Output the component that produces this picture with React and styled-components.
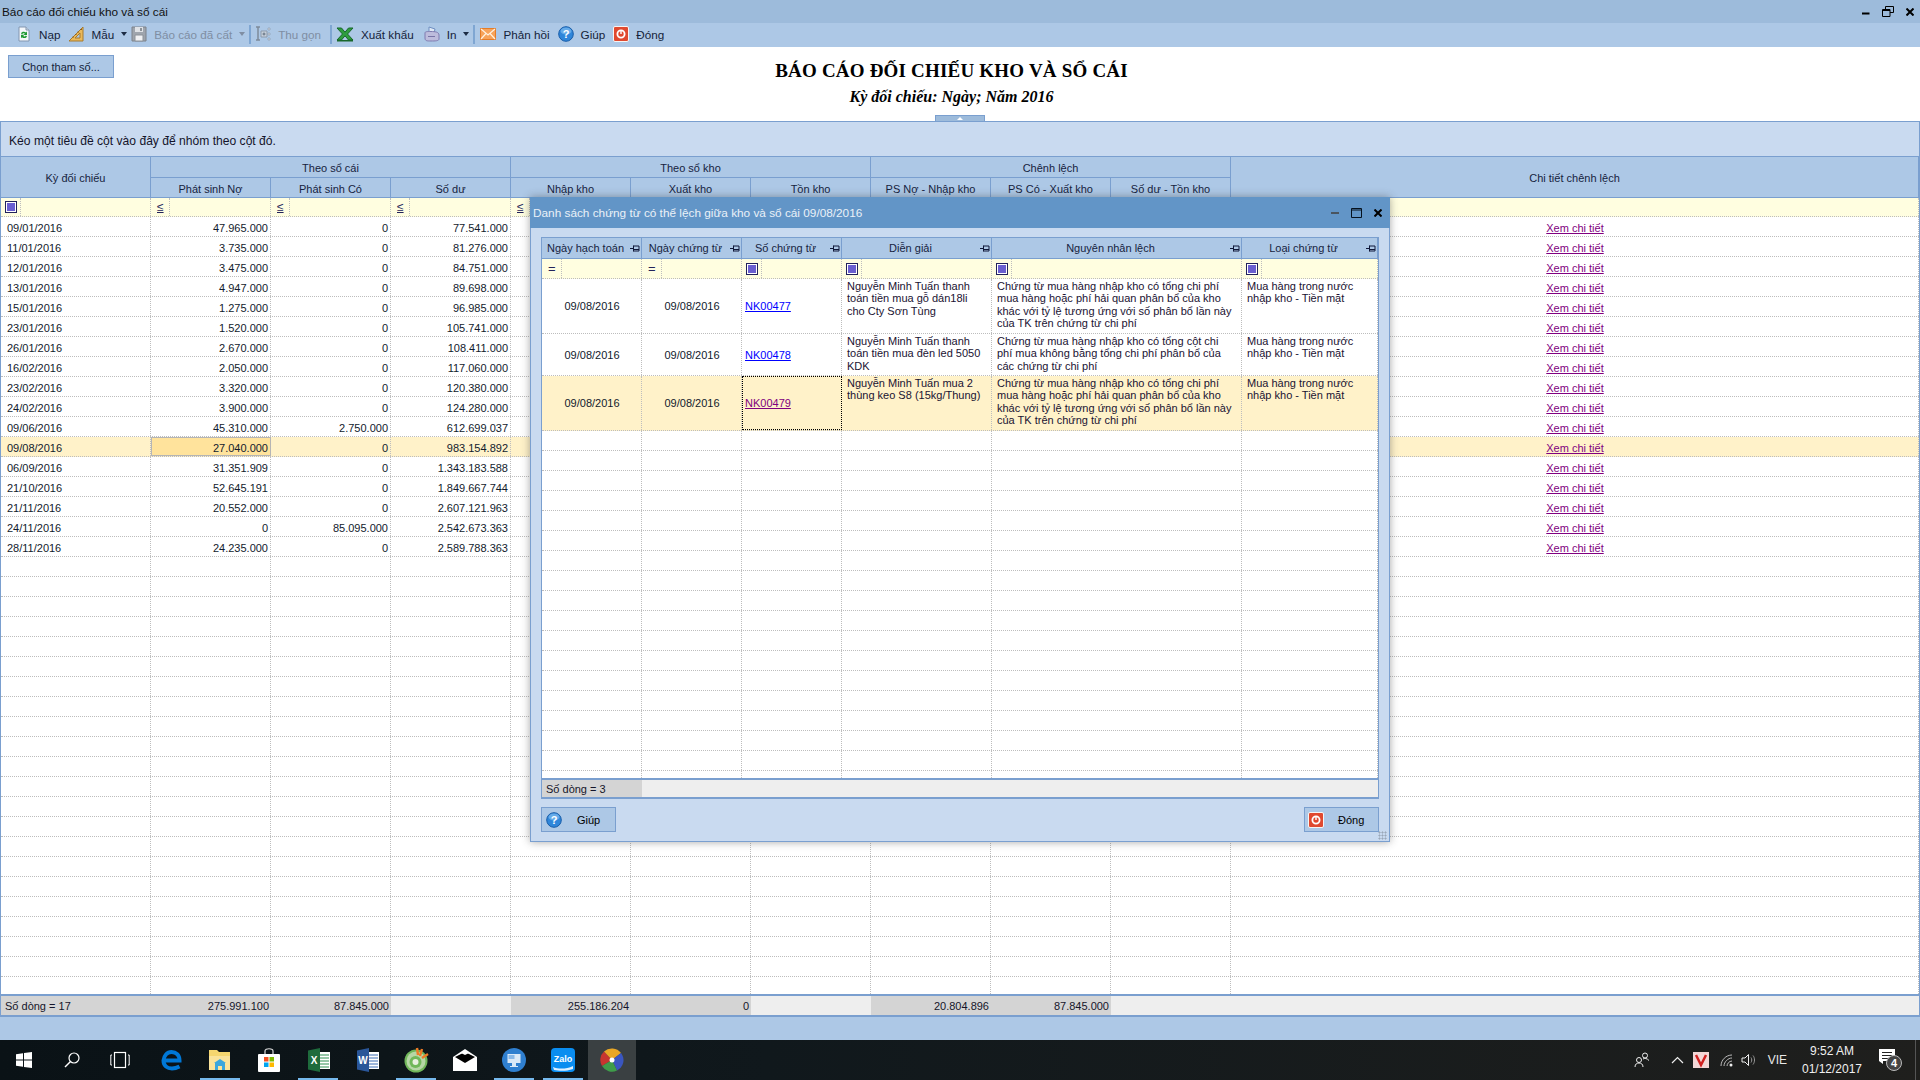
import React from "react";
import styled, { createGlobalStyle } from "styled-components";

const Global = createGlobalStyle`
  html, body { margin: 0; padding: 0; background: #fff; }
  body { font-family: "Liberation Sans", Arial, sans-serif; font-size: 11px; color: #111; overflow: hidden; }
  * { box-sizing: border-box; }
`;

const LINE = "#7a9fcf";
const DOT = "#bdbdbd";
const MAIN_COLS = "150px repeat(9, 120px) 1fr";
const MODAL_COLS = "100px 100px 100px 150px 250px 1fr";

const Page = styled.div`
  position: relative;
  width: 1920px;
  height: 1080px;
  display: flex;
  flex-direction: column;
  overflow: hidden;
`;
const TitleBar = styled.div`
  height: 23px;
  flex: none;
  background: #9dbbdb;
  display: flex;
  align-items: center;
  justify-content: space-between;
  padding: 0 6px 0 2px;
  font-size: 11.8px;
`;
const WinControls = styled.div`
  display: flex;
  align-items: center;
  gap: ${(p) => p.$gap || 10}px;
`;
const Toolbar = styled.div`
  height: 24px;
  flex: none;
  background: #adc8e6;
  display: flex;
  align-items: center;
  padding: 0 0 2px 4px;
  font-size: 11.7px;
`;
const Grip = styled.div`
  width: 4px;
  height: 18px;
  background-image: radial-gradient(#7f97b3 40%, transparent 45%);
  background-size: 2px 2px;
`;
const Tool = styled.div`
  display: flex;
  align-items: center;
  gap: 7px;
  margin-left: ${(p) => p.$ml || 0}px;
  color: ${(p) => (p.$off ? "#7f8ea3" : "#14233a")};
  white-space: nowrap;
`;
const Caret = styled.span`
  width: 0;
  height: 0;
  margin-left: ${(p) => p.$ml || 0}px;
  border-left: 3.5px solid transparent;
  border-right: 3.5px solid transparent;
  border-top: 4px solid ${(p) => (p.$off ? "#7f8ea3" : "#1c2c44")};
`;
const Sep = styled.div`
  width: 2px;
  height: 19px;
  margin-left: ${(p) => p.$ml || 5}px;
  background: #7fa6d2;
`;

const ReportHead = styled.div`
  position: relative;
  flex: none;
  height: 74px;
  background: #fff;
  display: grid;
  grid-template-columns: 1fr auto 1fr;
  padding: 8px 0 0 8px;
`;
const ParamButton = styled.div`
  width: 106px;
  height: 23px;
  display: flex;
  align-items: center;
  justify-content: center;
  background: #adc8e6;
  border: 1px solid ${LINE};
  font-size: 11px;
  color: #14233a;
`;
const Titles = styled.div`
  display: flex;
  flex-direction: column;
  align-items: center;
  font-family: "Liberation Serif", "Times New Roman", serif;
  color: #000;
  font-weight: 700;
  margin-left: -25px;
`;
const ReportTitle = styled.div`
  font-size: 19px;
  line-height: 22px;
  margin-top: 5px;
  letter-spacing: 0.2px;
`;
const ReportSub = styled.div`
  font-size: 16px;
  font-style: italic;
  line-height: 20px;
  margin-top: 5px;
`;
const Handle = styled.div`
  position: absolute;
  left: 935px;
  bottom: 0;
  width: 50px;
  height: 6px;
  background: #9dbbdb;
  border: 1px solid ${LINE};
  border-bottom: none;
  display: flex;
  justify-content: center;
  align-items: center;
  &::after {
    content: "";
    border-left: 3px solid transparent;
    border-right: 3px solid transparent;
    border-bottom: 3px solid #fff;
  }
`;
const GroupPanel = styled.div`
  flex: none;
  height: 36px;
  background: #c9daf0;
  border: 1px solid ${LINE};
  padding: 4px 0 0 8px;
  display: flex;
  align-items: center;
  color: #14142a;
  font-size: 12.1px;
`;
const GridFrame = styled.div`
  flex: 1;
  min-height: 0;
  display: flex;
  flex-direction: column;
  border-left: 1px solid ${LINE};
  border-right: 1px solid ${LINE};
  background: #fff;
`;
const HeadGrid = styled.div`
  flex: none;
  display: grid;
  grid-template-columns: ${(p) => p.$cols};
  grid-template-rows: ${(p) => p.$rows};
`;
const HeadCell = styled.div`
  grid-column: span ${(p) => p.$cs || 1};
  grid-row: span ${(p) => p.$rs || 1};
  background: #adc8e6;
  border-right: 1px solid ${LINE};
  border-bottom: 1px solid ${LINE};
  display: flex;
  align-items: center;
  justify-content: center;
  position: relative;
  padding-right: ${(p) => (p.$pin ? 12 : 0)}px;
  color: #16233e;
  white-space: nowrap;
`;
const MainHead = styled(HeadCell)`
  padding-top: 2px;
`;
const PinMark = styled.svg`
  position: absolute;
  right: 1px;
  top: 6px;
`;
const Body = styled.div`
  flex: 1;
  min-height: 0;
  overflow: hidden;
`;
const Row = styled.div`
  display: grid;
  grid-template-columns: ${(p) => p.$cols};
  height: ${(p) => p.$h || 20}px;
  background: ${(p) => (p.$sel ? "#fff2c9" : p.$filter ? "#fffee0" : "#fff")};
  border-bottom: 1px dotted ${DOT};
`;
const Cell = styled.div`
  border-right: 1px dotted ${DOT};
  display: flex;
  align-items: center;
  justify-content: ${(p) => (p.$align === "right" ? "flex-end" : p.$align === "center" ? "center" : "flex-start")};
  padding: 0 2px 0 ${(p) => p.$pl ?? 3}px;
  color: #111a2c;
  white-space: pre;
  overflow: hidden;
  ${(p) => p.$active && `background: #ffe39c; outline: 1px solid #b5b5b5; outline-offset: -1px;`}
  ${(p) => p.$focus && `outline: 1px dotted #000; outline-offset: -1px;`}
`;
const MainCell = styled(Cell)`
  padding-top: 2px;
`;
const WrapCell = styled.div`
  border-right: 1px dotted ${DOT};
  padding: 1px 0 0 5px;
  line-height: 12.3px;
  color: #1a1232;
  white-space: pre;
  overflow: hidden;
`;
const FilterCell = styled.div`
  border-right: 1px dotted ${DOT};
  display: grid;
  grid-template-columns: ${(p) => p.$w || 19}px 1fr;
  align-items: center;
  height: 100%;
  overflow: hidden;
`;
const FilterOp = styled.div`
  height: 100%;
  border-right: 1px dotted ${DOT};
  display: flex;
  align-items: center;
  padding-left: ${(p) => p.$pl || 5}px;
  font-size: 13px;
  color: #23235a;
`;
const OpLe = styled.span`
  text-decoration: underline;
  font-size: 12px;
`;
const CheckMark = styled.span`
  width: 12px;
  height: 12px;
  border: 1px solid #22225c;
  padding: 1px;
  background: #fff;
  display: block;
  &::after {
    content: "";
    display: block;
    width: 100%;
    height: 100%;
    background: #6a5fd0;
  }
`;
const Lnk = styled.a`
  color: ${(p) => (p.$seen ? "#800080" : "#0000ff")};
  text-decoration: underline;
`;
const TotalRow = styled.div`
  flex: none;
  display: grid;
  grid-template-columns: ${(p) => p.$cols};
  height: ${(p) => p.$h}px;
  border-top: 2px solid ${LINE};
  border-bottom: 2px solid ${LINE};
  background: #eeeeee;
  box-sizing: content-box;
`;
const TotalCell = styled.div`
  background: ${(p) => (p.$dark ? "#d4d4d4" : "#eeeeee")};
  display: flex;
  align-items: center;
  justify-content: ${(p) => (p.$left ? "flex-start" : "flex-end")};
  padding: 0 2px 0 4px;
  color: #14142a;
  white-space: nowrap;
`;
const StatusBand = styled.div`
  flex: none;
  height: 23px;
  background: #adc8e6;
`;

const Modal = styled.div`
  position: absolute;
  left: 530px;
  top: 197px;
  width: 860px;
  height: 645px;
  background: #c9daf0;
  border: 1px solid ${LINE};
  border-top: none;
  box-shadow: 0 0 8px rgba(60, 60, 60, 0.45);
  display: flex;
  flex-direction: column;
`;
const ModalTitle = styled.div`
  flex: none;
  height: 31px;
  margin: 0 -1px;
  background: #6295c7;
  color: #eaf1f8;
  font-size: 11.8px;
  display: flex;
  align-items: center;
  justify-content: space-between;
  padding: 0 8px 0 3px;
`;
const ModalBody = styled.div`
  flex: 1;
  min-height: 0;
  display: flex;
  flex-direction: column;
  padding: 9px 10px 0 10px;
`;
const ModalGrid = styled.div`
  height: 562px;
  flex: none;
  display: flex;
  flex-direction: column;
  background: #fff;
  border: 1px solid ${LINE};
  border-bottom: none;
`;
const ModalFoot = styled.div`
  position: relative;
  flex: 1;
  display: flex;
  justify-content: space-between;
  padding-top: 8px;
`;
const ModalBtn = styled.div`
  width: 75px;
  height: 25px;
  background: #adc8e6;
  border: 1px solid ${LINE};
  display: flex;
  align-items: center;
  gap: ${(p) => p.$gap}px;
  padding-left: ${(p) => p.$pl}px;
  color: #000;
`;
const Corner = styled.div`
  position: absolute;
  right: -8px;
  bottom: 1px;
  width: 9px;
  height: 9px;
  background-image: radial-gradient(#9aa7b8 45%, transparent 50%);
  background-size: 3px 3px;
`;

const Taskbar = styled.div`
  flex: none;
  height: 40px;
  background: linear-gradient(90deg, #0a1216 0%, #10181c 40%, #1f1f1d 100%);
  display: flex;
  align-items: stretch;
  color: #fff;
`;
const TaskSlot = styled.div`
  position: relative;
  width: ${(p) => p.$w || 49}px;
  margin-left: ${(p) => p.$ml || 0}px;
  display: flex;
  align-items: center;
  padding-left: ${(p) => p.$pl ?? 10}px;
  background: ${(p) => (p.$active ? "#3a4042" : "transparent")};
  ${(p) =>
    p.$running &&
    `&::after { content: ""; position: absolute; left: 0; bottom: 0; width: 40px; height: 2px; background: #76b9ed; }`}
`;
const Tray = styled.div`
  margin-left: auto;
  display: flex;
  align-items: center;
  height: 100%;
  padding-right: 11px;
  margin-right: 4px;
  border-right: 1px solid #555;
`;
const TrayLabel = styled.span`
  font-size: 12px;
  color: #e8e8e8;
  margin-left: ${(p) => p.$ml || 0}px;
`;
const Clock = styled.div`
  margin-left: ${(p) => p.$ml || 0}px;
  width: 86px;
  display: flex;
  flex-direction: column;
  align-items: center;
  font-size: 12px;
  line-height: 18px;
  color: #f0f0f0;
`;
const TrayBox = styled.div`
  display: flex;
  margin-left: ${(p) => p.$ml || 0}px;
`;

/* ---------- icons ---------- */
const Pin = () => (
  <PinMark width="10" height="9" viewBox="0 0 10 9">
    <path d="M0 4.5H3M3.5 1.5V7.5M3.5 2H9V7H3.5M3.5 5.5H9" stroke="#10183a" fill="none" strokeWidth="1" />
  </PinMark>
);
const Icon = ({ children, s = 16, vb = 16 }) => (
  <svg width={s} height={s} viewBox={`0 0 ${vb} ${vb}`} style={{ display: "block", flex: "none" }}>
    {children}
  </svg>
);
const IcoRefresh = () => (
  <Icon>
    <path d="M3 1H10L13 4V15H3Z" fill="#f4f7fb" stroke="#8296b0" />
    <path d="M10 1V4H13" fill="#cfdbe9" stroke="#8296b0" />
    <path d="M5 7.5C5.500 5.500 8.500 5 10 6.500L11 5.500V9H7.600L8.800 7.800C8 7 6.600 7.200 6.200 8.200Z" fill="#1f9a32" />
    <path d="M11 10.200C10.500 12.200 7.500 12.800 6 11.200L5 12.200V8.800H8.400L7.200 10C8 10.800 9.400 10.600 9.800 9.600Z" fill="#1f9a32" />
  </Icon>
);
const IcoRuler = () => (
  <Icon>
    <path d="M15 1V15H1Z" fill="#eab95a" stroke="#a87a2c" />
    <path d="M12 7V12H7Z" fill="#adc8e6" stroke="#a87a2c" />
    <path d="M12 3.500H14M9.500 6H11M7 8.500H8.500M4.500 11H6" stroke="#8a5f20" />
  </Icon>
);
const IcoSave = () => (
  <Icon>
    <path d="M1 1H15V15H1Z" fill="#9fa5ad" stroke="#7c828a" />
    <path d="M4 1H12V6H4Z" fill="#dfe2e6" />
    <path d="M4 9H12V15H4Z" fill="#f0f1f3" stroke="#8c9299" />
    <path d="M9 2H11V5H9Z" fill="#8c9299" />
  </Icon>
);
const IcoTree = () => (
  <Icon>
    <path d="M1 1H5M1 14H5M3 1V14" stroke="#7d8a9b" strokeWidth="1.5" fill="none" />
    <path d="M6 5H12V11H6Z" fill="#c7d0db" stroke="#8c99aa" />
    <path d="M7.500 8H10.500M9 6.500V9.500" stroke="#5f6c7d" />
    <path d="M13 2H15V4H13ZM13 7H15V9H13ZM13 12H15V14H13Z" fill="#d6dde6" stroke="#8c99aa" strokeWidth=".6" />
  </Icon>
);
const IcoExcel = () => (
  <Icon s={18} vb={18}>
    <path d="M1 3H5.500L9 7.200L12.500 3H17L11.500 9L17 15H12.500L9 10.800L5.500 15H1L6.500 9Z" fill="#2f9e3f" stroke="#17672a" />
    <path d="M1 15H17V16.500H1Z" fill="#17672a" />
  </Icon>
);
const IcoPrint = () => (
  <Icon>
    <path d="M5 1L11 3L10 7H5Z" fill="#dfe8f4" stroke="#6f8fc2" />
    <path d="M1 7C1 5.500 3 5.500 7 5.500S15 6 15 9V13C15 15 11 15 7 15S1 15 1 12Z" fill="#bdbcdc" stroke="#7f7bb0" />
    <path d="M4 10.500H11" stroke="#7874a6" />
  </Icon>
);
const IcoMail = () => (
  <Icon>
    <path d="M0.500 2.500H15.500V13.500H0.500Z" fill="#f7a35a" stroke="#e57c26" />
    <path d="M1 3L8 9L15 3M1 13L6 7.500M15 13L10 7.500" fill="none" stroke="#fff1df" strokeWidth="1.2" />
  </Icon>
);
const IcoHelp = ({ s = 16 }) => (
  <Icon s={s}>
    <circle cx="8" cy="8" r="7.300" fill="#2f86da" stroke="#175ca8" />
    <ellipse cx="8" cy="5" rx="5.500" ry="3.500" fill="#8cc4f3" opacity=".6" />
    <text x="8" y="12" textAnchor="middle" fontFamily="Liberation Sans" fontWeight="700" fontSize="11" fill="#fff">?</text>
  </Icon>
);
const IcoClose = ({ s = 16 }) => (
  <Icon s={s}>
    <rect x="0.500" y="0.500" width="15" height="15" rx="1.500" fill="#e0492f" stroke="#f5f5f5" />
    <circle cx="8" cy="8" r="3.600" fill="none" stroke="#fff" strokeWidth="1.800" />
    <path d="M8 4.200V8" stroke="#fff" strokeWidth="1.400" />
  </Icon>
);
const WMin = () => (
  <svg width="8" height="8" viewBox="0 0 8 8"><path d="M0 5.500H7.500" stroke="#000" strokeWidth="2" /></svg>
);
const WRestore = () => (
  <svg width="12" height="11" viewBox="0 0 12 11">
    <path d="M3.500 3V.5H11.500V6.500H8M.5 3.500H8V10.500H.5Z M.5 4.500H8" fill="none" stroke="#000" />
  </svg>
);
const WClose = ({ c = "#000" }) => (
  <svg width="8" height="8" viewBox="0 0 8 8"><path d="M.5 .5L7.500 7.500M7.500 .5L.5 7.500" stroke={c} strokeWidth="2" /></svg>
);
const MMin = () => (
  <svg width="8" height="4" viewBox="0 0 8 4"><path d="M0 2H8" stroke="#4a5560" strokeWidth="2" /></svg>
);
const MMax = () => (
  <svg width="11" height="10" viewBox="0 0 11 10"><path d="M.5 .5H10.500V9.500H.5Z M.5 2H10.500" fill="none" stroke="#06121f" /></svg>
);

const TaskWin = () => (
  <Icon s={16}>
    <path d="M0 2.300L7 1.200V7.500H0ZM8 1L16 0V7.500H8ZM0 8.500H7V14.800L0 13.700ZM8 8.500H16V16L8 15Z" fill="#fff" />
  </Icon>
);
const TaskSearch = () => (
  <Icon s={16}>
    <circle cx="10" cy="6" r="5" fill="none" stroke="#fff" strokeWidth="1.200" />
    <path d="M6.500 9.500L1 15" stroke="#fff" strokeWidth="1.400" />
  </Icon>
);
const TaskView = () => (
  <Icon s={20} vb={20}>
    <rect x="4.500" y="2.500" width="11" height="15" fill="none" stroke="#fff" strokeWidth="1.200" />
    <path d="M2 5H.8V15H2M18 5H19.200V15H18" fill="none" stroke="#fff" />
  </Icon>
);
const TaskEdge = () => (
  <Icon s={22} vb={22}>
    <path d="M4 11.500H18.500C18.500 6 15 3 10.500 3C6 3 3 7 2.500 11.500C2.500 17 6.500 19.500 11 19.500C14 19.500 16.500 18.500 18.500 17.500" fill="none" stroke="#0078d7" strokeWidth="4" />
  </Icon>
);
const TaskFiles = () => (
  <Icon s={24} vb={24}>
    <path d="M1 2H9L11 4H22V22H1Z" fill="#f5d66f" />
    <path d="M1 8H22V22H1Z" fill="#fae39a" />
    <path d="M7 15H17V22H14V18H10V22H7Z" fill="#3aa6dd" />
    <path d="M6 15L12 11L18 15Z" fill="#3aa6dd" />
  </Icon>
);
const TaskStore = () => (
  <Icon s={24} vb={24}>
    <path d="M8 6V3C8 0 16 0 16 3V6" fill="none" stroke="#ddd" strokeWidth="1.200" />
    <rect x="1" y="6" width="22" height="18" rx="1" fill="#fff" />
    <path d="M7 9H11.500V13.500H7Z" fill="#f25022" />
    <path d="M12.500 9H17V13.500H12.500Z" fill="#7fba00" />
    <path d="M7 14.500H11.500V19H7Z" fill="#00a4ef" />
    <path d="M12.500 14.500H17V19H12.500Z" fill="#ffb900" />
  </Icon>
);
const TaskOffice = ({ bg, ln, ch }) => (
  <Icon s={24} vb={24}>
    <path d="M12 4H23V21H12Z" fill="#fff" />
    <path d="M13 7H22M13 10H22M13 13H22M13 16H22M13 19H22" stroke={ln} strokeWidth="1" />
    <path d="M1 2.500L13 0V24L1 21.500Z" fill={bg} />
    <text x="7" y="16" textAnchor="middle" fontFamily="Liberation Sans" fontWeight="700" fontSize="10" fill="#fff">{ch}</text>
  </Icon>
);
const TaskCoc = () => (
  <Icon s={26} vb={26}>
    <circle cx="12" cy="14" r="11.500" fill="#71b75a" />
    <circle cx="12" cy="14" r="9.500" fill="#e5ebd8" opacity=".6" />
    <circle cx="11.500" cy="15" r="6" fill="#71b75a" />
    <circle cx="11.500" cy="15" r="3" fill="#e9efdf" />
    <path d="M13 1L14 8M18 2L16 9M24 7L18 11" stroke="#ee7a24" strokeWidth="2.400" />
  </Icon>
);
const TaskMail = () => (
  <Icon s={24} vb={24}>
    <path d="M0 9L12 1L24 9V23H0Z" fill="#fff" />
    <path d="M2 9L12 4L22 9L12 15Z" fill="#000" />
    <path d="M8 5L12 2.500L16 5L12 7Z" fill="#fff" />
  </Icon>
);
const TaskRemote = () => (
  <Icon s={24} vb={24}>
    <circle cx="12" cy="12" r="12" fill="#2f7fcf" />
    <rect x="5.500" y="6" width="13" height="9" fill="#dbe9f7" />
    <rect x="6.500" y="7" width="6" height="4" fill="#8ab9e8" />
    <path d="M10 15H14V18H16V19H8V18H10Z" fill="#dbe9f7" />
  </Icon>
);
const TaskZalo = () => (
  <Icon s={24} vb={24}>
    <rect x="0" y="0" width="24" height="24" rx="4" fill="#0a8df0" />
    <text x="12" y="13.500" textAnchor="middle" fontFamily="Liberation Sans" fontWeight="700" fontSize="9" fill="#fff">Zalo</text>
    <path d="M2 19C7 21 15 21.500 22 18V21C15 23.500 8 23 3 22Z" fill="#dff0ff" />
  </Icon>
);
const TaskColor = () => (
  <Icon s={24} vb={24}>
    <path d="M12 12L4 3.500A11.500 11.500 0 0 0 2 18Z" fill="#c8352f" />
    <path d="M12 12L4 3.500A11.500 11.500 0 0 1 21 5Z" fill="#e9a726" />
    <path d="M12 12L21 5A11.500 11.500 0 0 1 17 22.500Z" fill="#3a56c0" />
    <path d="M12 12L17 22.500A11.500 11.500 0 0 1 2 18Z" fill="#3f9d4a" />
    <circle cx="12" cy="12" r="2.500" fill="#fff" />
  </Icon>
);
const TrayPeople = () => (
  <Icon s={16}>
    <circle cx="5" cy="8" r="2.500" fill="none" stroke="#eee" />
    <path d="M1 15C1 12 3 11 5 11S9 12 9 15" fill="none" stroke="#eee" />
    <circle cx="11" cy="3.500" r="2.500" fill="none" stroke="#eee" />
    <path d="M9 7C10.500 6 13 6.200 15 8.500" fill="none" stroke="#eee" />
  </Icon>
);
const TrayChevron = () => (
  <svg width="13" height="8" viewBox="0 0 13 8" style={{ display: "block" }}>
    <path d="M1 7L6.500 1.500L12 7" fill="none" stroke="#eee" strokeWidth="1.200" />
  </svg>
);
const TrayV = () => (
  <Icon s={16}>
    <rect width="16" height="16" fill="#f3d6d6" />
    <path d="M3 3L8 13L13 3" fill="none" stroke="#d02020" strokeWidth="2.500" />
  </Icon>
);
const TrayWifi = () => (
  <Icon s={14} vb={14}>
    <path d="M1 13C1 7 6 2 12 2M4 13C4 9 8 5 12 5M7 13C7 11 9 8 12 8" fill="none" stroke="#bbb" />
    <circle cx="11" cy="12" r="1.500" fill="#eee" />
  </Icon>
);
const TraySound = () => (
  <Icon s={16}>
    <path d="M1 6H4L7.500 2.500V13.500L4 10H1Z" fill="none" stroke="#eee" />
    <path d="M10 5.500C11 7 11 9 10 10.500M12 3.500C14 6 14 10 12 12.500" fill="none" stroke="#999" />
  </Icon>
);
const TrayNote = () => (
  <svg width="26" height="24" viewBox="0 0 26 24" style={{ display: "block" }}>
    <path d="M1 1H17V13H5V16L1 13Z" fill="#fff" />
    <path d="M4 4.500H14M4 7.500H14M4 10.500H11" stroke="#222" />
    <circle cx="16" cy="15" r="7.500" fill="#444" stroke="#bbb" />
    <text x="16" y="19" textAnchor="middle" fontFamily="Liberation Sans" fontWeight="700" fontSize="11" fill="#fff">4</text>
  </svg>
);

/* ---------- data ---------- */
const DATA = [
  ["09/01/2016", "47.965.000", "0", "77.541.000"],
  ["11/01/2016", "3.735.000", "0", "81.276.000"],
  ["12/01/2016", "3.475.000", "0", "84.751.000"],
  ["13/01/2016", "4.947.000", "0", "89.698.000"],
  ["15/01/2016", "1.275.000", "0", "96.985.000"],
  ["23/01/2016", "1.520.000", "0", "105.741.000"],
  ["26/01/2016", "2.670.000", "0", "108.411.000"],
  ["16/02/2016", "2.050.000", "0", "117.060.000"],
  ["23/02/2016", "3.320.000", "0", "120.380.000"],
  ["24/02/2016", "3.900.000", "0", "124.280.000"],
  ["09/06/2016", "45.310.000", "2.750.000", "612.699.037"],
  ["09/08/2016", "27.040.000", "0", "983.154.892"],
  ["06/09/2016", "31.351.909", "0", "1.343.183.588"],
  ["21/10/2016", "52.645.191", "0", "1.849.667.744"],
  ["21/11/2016", "20.552.000", "0", "2.607.121.963"],
  ["24/11/2016", "0", "85.095.000", "2.542.673.363"],
  ["28/11/2016", "24.235.000", "0", "2.589.788.363"],
];
const TOTALS = [
  ["Số dòng = 17", 1, 1],
  ["275.991.100", 1],
  ["87.845.000", 1],
  ["", 0],
  ["255.186.204", 1],
  ["0", 1],
  ["", 0],
  ["20.804.896", 1],
  ["87.845.000", 1],
  ["", 0],
  ["", 0],
];
const DETAIL_A =
  "Chứng từ mua hàng nhập kho có tổng chi phí\nmua hàng hoặc phí hải quan phân bổ của kho\nkhác với tỷ lệ tương ứng với số phân bổ lần này\ncủa TK trên chứng từ chi phí";
const DETAIL_B =
  "Chứng từ mua hàng nhập kho có tổng cột chi\nphí mua không bằng tổng chi phí phân bổ của\ncác chứng từ chi phí";
const KIND = "Mua hàng trong nước\nnhập kho - Tiền mặt";
const VOUCHERS = [
  { no: "NK00477", h: 55, desc: "Nguyễn Minh Tuấn thanh\ntoán tiền mua gỗ dán18li\ncho Cty Sơn Tùng", why: DETAIL_A },
  { no: "NK00478", h: 42, desc: "Nguyễn Minh Tuấn thanh\ntoán tiền mua đèn led 5050\nKDK", why: DETAIL_B },
  { no: "NK00479", h: 55, sel: true, desc: "Nguyễn Minh Tuấn mua 2\nthùng keo S8 (15kg/Thung)", why: DETAIL_A },
];
const MODAL_HEADS = ["Ngày hạch toán", "Ngày chứng từ", "Số chứng từ", "Diễn giải", "Nguyên nhân lệch", "Loại chứng từ"];

const FilterRow = ({ cols, ops, h, w }) => (
  <Row $cols={cols} $filter $h={h}>
    {ops.map((op, i) => (
      <FilterCell key={i} $w={op === "box" || w ? 20 : 19}>
        <FilterOp $pl={op === "box" ? 4 : 6}>
          {op === "box" ? <CheckMark /> : op === "le" ? <OpLe>≤</OpLe> : op === "eq" ? "=" : null}
        </FilterOp>
      </FilterCell>
    ))}
  </Row>
);

export default function App() {
  return (
    <Page>
      <Global />
      <TitleBar>
        <span>Báo cáo đối chiếu kho và sổ cái</span>
        <WinControls $gap={12}>
          <WMin />
          <WRestore />
          <WClose />
        </WinControls>
      </TitleBar>

      <Toolbar>
        <Grip />
        <Tool $ml={8}><IcoRefresh /><span>Nạp</span></Tool>
        <Tool $ml={8}><IcoRuler /><span>Mẫu</span><Caret /></Tool>
        <Tool $ml={4} $off><IcoSave /><span>Báo cáo đã cất</span><Caret $off /></Tool>
        <Sep $ml={4} />
        <Tool $ml={4} $off><IcoTree /><span>Thu gọn</span></Tool>
        <Sep $ml={9} />
        <Tool $ml={4}><IcoExcel /><span>Xuất khẩu</span></Tool>
        <Tool $ml={10}><IcoPrint /><span>In</span><Caret /></Tool>
        <Sep $ml={4} />
        <Tool $ml={5}><IcoMail /><span>Phản hồi</span></Tool>
        <Tool $ml={8}><IcoHelp /><span>Giúp</span></Tool>
        <Tool $ml={8}><IcoClose /><span>Đóng</span></Tool>
      </Toolbar>

      <ReportHead>
        <div><ParamButton>Chọn tham số...</ParamButton></div>
        <Titles>
          <ReportTitle>BÁO CÁO ĐỐI CHIẾU KHO VÀ SỔ CÁI</ReportTitle>
          <ReportSub>Kỳ đối chiếu: Ngày; Năm 2016</ReportSub>
        </Titles>
        <div />
        <Handle />
      </ReportHead>

      <GroupPanel>Kéo một tiêu đề cột vào đây để nhóm theo cột đó.</GroupPanel>

      <GridFrame>
        <HeadGrid $cols={MAIN_COLS} $rows="21px 20px">
          <MainHead $rs={2}>Kỳ đối chiếu</MainHead>
          <MainHead $cs={3}>Theo sổ cái</MainHead>
          <MainHead $cs={3}>Theo sổ kho</MainHead>
          <MainHead $cs={3}>Chênh lệch</MainHead>
          <MainHead $rs={2}>Chi tiết chênh lệch</MainHead>
          {["Phát sinh Nợ", "Phát sinh Có", "Số dư", "Nhập kho", "Xuất kho", "Tồn kho", "PS Nợ - Nhập kho", "PS Có - Xuất kho", "Số dư - Tồn kho"].map((t) => (
            <MainHead key={t}>{t}</MainHead>
          ))}
        </HeadGrid>
        <Body>
          <FilterRow cols={MAIN_COLS} h={19} ops={["box", "le", "le", "le", "le", "", "", "", "", "", ""]} />
          {DATA.map((r, i) => {
            const sel = r[0] === "09/08/2016";
            return (
              <Row key={i} $cols={MAIN_COLS} $sel={sel}>
                <MainCell $pl={6}>{r[0]}</MainCell>
                <MainCell $align="right" $active={sel}>{r[1]}</MainCell>
                <MainCell $align="right">{r[2]}</MainCell>
                <MainCell $align="right">{r[3]}</MainCell>
                {Array.from({ length: 6 }, (_, k) => <Cell key={k} />)}
                <MainCell $align="center"><Lnk $seen>Xem chi tiết</Lnk></MainCell>
              </Row>
            );
          })}
          {Array.from({ length: 22 }, (_, i) => (
            <Row key={i} $cols={MAIN_COLS}>
              {Array.from({ length: 11 }, (_, k) => <Cell key={k} />)}
            </Row>
          ))}
        </Body>
        <TotalRow $cols={MAIN_COLS} $h={19}>
          {TOTALS.map(([t, dark, left], i) => (
            <TotalCell key={i} $dark={dark} $left={left}>{t}</TotalCell>
          ))}
        </TotalRow>
      </GridFrame>
      <StatusBand />

      <Taskbar>
        <TaskSlot $w={48} $pl={16}><TaskWin /></TaskSlot>
        <TaskSlot $w={48} $pl={16}><TaskSearch /></TaskSlot>
        <TaskSlot $w={55} $pl={14}><TaskView /></TaskSlot>
        <TaskSlot $pl={10}><TaskEdge /></TaskSlot>
        <TaskSlot $running $pl={8}><TaskFiles /></TaskSlot>
        <TaskSlot $pl={8}><TaskStore /></TaskSlot>
        <TaskSlot $running $pl={9}><TaskOffice bg="#1e6b3c" ln="#2f8f52" ch="X" /></TaskSlot>
        <TaskSlot $pl={9}><TaskOffice bg="#2a5699" ln="#3f6fb5" ch="W" /></TaskSlot>
        <TaskSlot $running $pl={8}><TaskCoc /></TaskSlot>
        <TaskSlot $pl={8}><TaskMail /></TaskSlot>
        <TaskSlot $running $pl={8}><TaskRemote /></TaskSlot>
        <TaskSlot $running $pl={8}><TaskZalo /></TaskSlot>
        <TaskSlot $active $w={48} $ml={-4} $pl={12}><TaskColor /></TaskSlot>
        <Tray>
          <TrayBox><TrayPeople /></TrayBox>
          <TrayBox $ml={21}><TrayChevron /></TrayBox>
          <TrayBox $ml={9}><TrayV /></TrayBox>
          <TrayBox $ml={11}><TrayWifi /></TrayBox>
          <TrayBox $ml={7}><TraySound /></TrayBox>
          <TrayLabel $ml={11}>VIE</TrayLabel>
          <Clock $ml={2}>
            <span>9:52 AM</span>
            <span>01/12/2017</span>
          </Clock>
          <TrayBox $ml={3}><TrayNote /></TrayBox>
        </Tray>
      </Taskbar>

      <Modal>
        <ModalTitle>
          <span>Danh sách chứng từ có thể lệch giữa kho và sổ cái 09/08/2016</span>
          <WinControls $gap={12}>
            <MMin />
            <MMax />
            <WClose />
          </WinControls>
        </ModalTitle>
        <ModalBody>
          <ModalGrid>
            <HeadGrid $cols={MODAL_COLS} $rows="21px">
              {MODAL_HEADS.map((t) => (
                <HeadCell key={t} $pin>{t}<Pin /></HeadCell>
              ))}
            </HeadGrid>
            <Body>
              <FilterRow cols={MODAL_COLS} h={20} w ops={["eq", "eq", "box", "box", "box", "box"]} />
              {VOUCHERS.map((v) => (
                <Row key={v.no} $cols={MODAL_COLS} $h={v.h} $sel={v.sel}>
                  <Cell $align="center">09/08/2016</Cell>
                  <Cell $align="center">09/08/2016</Cell>
                  <Cell $focus={v.sel}>
                    <Lnk $seen={v.sel}>{v.no}</Lnk>
                  </Cell>
                  <WrapCell>{v.desc}</WrapCell>
                  <WrapCell>{v.why}</WrapCell>
                  <WrapCell>{KIND}</WrapCell>
                </Row>
              ))}
              {Array.from({ length: 18 }, (_, i) => (
                <Row key={i} $cols={MODAL_COLS}>
                  {Array.from({ length: 6 }, (_, k) => <Cell key={k} />)}
                </Row>
              ))}
            </Body>
            <TotalRow $cols={MODAL_COLS} $h={17}>
              <TotalCell $dark $left>Số dòng = 3</TotalCell>
            </TotalRow>
          </ModalGrid>
          <ModalFoot>
            <ModalBtn $pl={4} $gap={15}><IcoHelp s={16} /><span>Giúp</span></ModalBtn>
            <ModalBtn $pl={3} $gap={14}><IcoClose s={16} /><span>Đóng</span></ModalBtn>
            <Corner />
          </ModalFoot>
        </ModalBody>
      </Modal>
    </Page>
  );
}
